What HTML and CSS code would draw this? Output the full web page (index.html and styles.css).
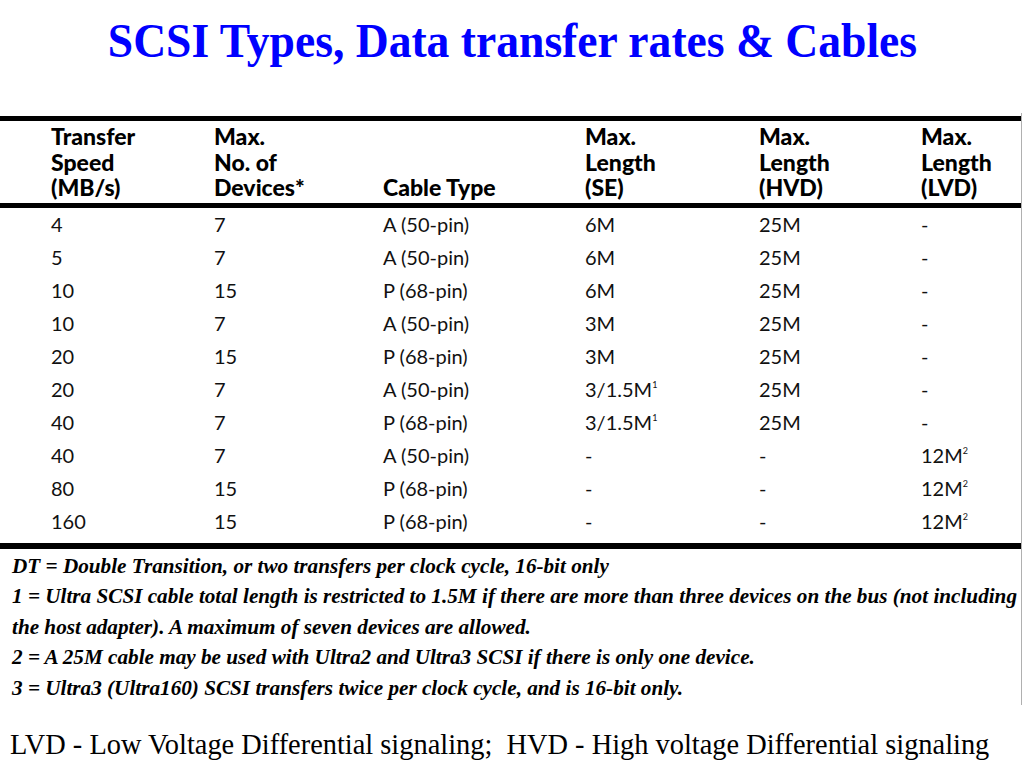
FILE: index.html
```html
<!DOCTYPE html>
<html>
<head>
<meta charset="utf-8">
<link rel="stylesheet" href="styles.css">
</head>
<body>
<header class="title-bar">
  <h1 class="title">SCSI Types, Data transfer rates &amp; Cables</h1>
</header>
<section class="scan">
  <div class="rule rule-top"></div>
  <div class="row head">
    <div>Transfer<br>Speed<br>(MB/s)</div>
    <div>Max.<br>No. of<br>Devices*</div>
    <div><br><br>Cable Type</div>
    <div>Max.<br>Length<br>(SE)</div>
    <div>Max.<br>Length<br>(HVD)</div>
    <div>Max.<br>Length<br>(LVD)</div>
  </div>
  <div class="rule rule-mid"></div>
  <div class="body">
    <div class="row"><div>4</div><div>7</div><div>A (50-pin)</div><div>6M</div><div>25M</div><div>-</div></div>
    <div class="row"><div>5</div><div>7</div><div>A (50-pin)</div><div>6M</div><div>25M</div><div>-</div></div>
    <div class="row"><div>10</div><div>15</div><div>P (68-pin)</div><div>6M</div><div>25M</div><div>-</div></div>
    <div class="row"><div>10</div><div>7</div><div>A (50-pin)</div><div>3M</div><div>25M</div><div>-</div></div>
    <div class="row"><div>20</div><div>15</div><div>P (68-pin)</div><div>3M</div><div>25M</div><div>-</div></div>
    <div class="row"><div>20</div><div>7</div><div>A (50-pin)</div><div>3/1.5M<sup>1</sup></div><div>25M</div><div>-</div></div>
    <div class="row"><div>40</div><div>7</div><div>P (68-pin)</div><div>3/1.5M<sup>1</sup></div><div>25M</div><div>-</div></div>
    <div class="row"><div>40</div><div>7</div><div>A (50-pin)</div><div>-</div><div>-</div><div>12M<sup>2</sup></div></div>
    <div class="row"><div>80</div><div>15</div><div>P (68-pin)</div><div>-</div><div>-</div><div>12M<sup>2</sup></div></div>
    <div class="row"><div>160</div><div>15</div><div>P (68-pin)</div><div>-</div><div>-</div><div>12M<sup>2</sup></div></div>
  </div>
  <div class="rule rule-bottom"></div>
  <div class="notes">
    <p>DT = Double Transition, or two transfers per clock cycle, 16-bit only</p>
    <p>1 = Ultra SCSI cable total length is restricted to 1.5M if there are more than three devices on the bus (not including</p>
    <p>the host adapter). A maximum of seven devices are allowed.</p>
    <p>2 = A 25M cable may be used with Ultra2 and Ultra3 SCSI if there is only one device.</p>
    <p>3 = Ultra3 (Ultra160) SCSI transfers twice per clock cycle, and is 16-bit only.</p>
  </div>
</section>
<p class="caption">LVD - Low Voltage Differential signaling;&nbsp; HVD - High voltage Differential signaling</p>
</body>
</html>
```
FILE: styles.css
```css
html, body {
  margin: 0;
  padding: 0;
  background: #ffffff;
}
body {
  width: 1024px;
  height: 768px;
  overflow: hidden;
  font-family: "Liberation Serif", serif;
}
.title-bar {
  height: 113px;
  display: flex;
  justify-content: center;
}
.title {
  margin: 13px 0 0 0;
  font-family: "Liberation Serif", serif;
  font-weight: bold;
  font-size: 48.5px;
  line-height: 56px;
  color: #0000ff;
  white-space: nowrap;
  transform: scaleX(0.94);
}
.scan {
  width: 1021px;
  height: 592px;
  border-right: 1px solid #b0b0b0;
  display: flex;
  flex-direction: column;
  font-family: "Lato", "DejaVu Sans", sans-serif;
}
.rule {
  background: #000;
}
.rule-top { height: 5px; margin-top: 3px; }
.rule-mid { height: 5px; margin-top: 2px; }
.rule-bottom { height: 6px; margin-top: 5px; }
.row {
  display: grid;
  grid-template-columns: 163px 169px 202px 174px 162px 1fr;
  padding-left: 51px;
  font-size: 20px;
  color: #111;
}
.head {
  margin-top: 3px;
  font-weight: 900;
  font-size: 23px;
  line-height: 25.5px;
  color: #000;
}
.body .row {
  height: 33px;
  line-height: 33px;
}
sup {
  font-size: 9px;
  line-height: 0;
  vertical-align: 9px;
}
.notes {
  padding: 2px 0 0 12px;
  font-family: "Liberation Serif", serif;
  font-style: italic;
  font-weight: bold;
  font-size: 21.2px;
  line-height: 30.5px;
  color: #000;
}
.notes p {
  margin: 0;
  white-space: nowrap;
}
.caption {
  margin: 24px 0 0 10px;
  font-size: 28.4px;
  line-height: 32px;
  color: #000;
}
```
